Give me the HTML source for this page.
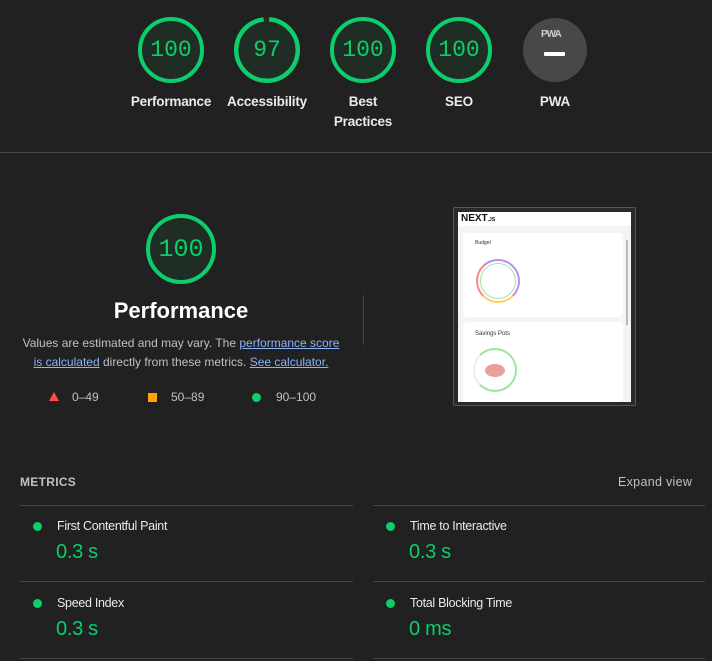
<!DOCTYPE html>
<html><head><meta charset="utf-8"><style>
*{margin:0;padding:0;box-sizing:border-box}
body{width:712px;height:661px;background:#212121;font-family:"Liberation Sans",Arial,sans-serif;color:#e8eaed;position:relative;overflow:hidden}
.abs{position:absolute}
.g{position:absolute;width:66px;height:66px;border-radius:50%;border:4.5px solid #0cce6b;background:#1f2d25;color:#0cce6b;font-family:"Liberation Mono",monospace;font-size:23px;display:flex;align-items:center;justify-content:center}
.lbl{position:absolute;width:96px;text-align:center;font-size:13.5px;font-weight:bold;line-height:20px;color:#e8eaed;letter-spacing:-0.2px}
.hr{position:absolute;height:1px;background:#444}
.dot{position:absolute;width:9px;height:9px;border-radius:50%;background:#0cce6b}
.mt{position:absolute;font-size:12.5px;color:#e8eaed;letter-spacing:-0.3px}
.mv{position:absolute;font-size:20px;color:#0cce6b;letter-spacing:-0.3px}
</style></head><body>
<div class="g" style="left:138px;top:17px">100</div>
<div class="g" style="left:234px;top:17px;border:none">
 <svg class="abs" style="left:0;top:0" width="66" height="66"><circle cx="33" cy="33" r="30.75" fill="none" stroke="#0cce6b" stroke-width="4.5" stroke-dasharray="187.4 193.2" transform="rotate(-86 33 33)"/></svg>
 <span style="position:relative">97</span></div>
<div class="g" style="left:330px;top:17px">100</div>
<div class="g" style="left:426px;top:17px">100</div>
<div class="abs" style="left:523px;top:18px;width:64px;height:64px;border-radius:50%;background:#484848"></div>
<div class="abs" style="left:541px;top:29px;font-size:10px;color:#ccc;font-weight:bold;letter-spacing:-1px">PWA</div>
<div class="abs" style="left:544px;top:52px;width:21px;height:4px;background:#fff;border-radius:1px"></div>
<div class="lbl" style="left:123px;top:92px">Performance</div>
<div class="lbl" style="left:219px;top:92px">Accessibility</div>
<div class="lbl" style="left:315px;top:92px">Best<br>Practices</div>
<div class="lbl" style="left:411px;top:92px">SEO</div>
<div class="lbl" style="left:507px;top:92px">PWA</div>
<div class="hr" style="left:0;top:152px;width:712px"></div>

<div class="g" style="left:146px;top:214px;width:70px;height:70px;font-size:25px">100</div>
<div class="abs" style="left:40px;top:298px;width:282px;text-align:center;font-size:22px;font-weight:bold;color:#fff">Performance</div>
<div class="abs" style="left:20px;top:334px;width:322px;text-align:center;font-size:12px;line-height:19px;color:#bdc1c6">Values are estimated and may vary. The <span style="color:#8ab4f8;text-decoration:underline">performance score is calculated</span> directly from these metrics. <span style="color:#8ab4f8;text-decoration:underline">See calculator.</span></div>
<div class="abs" style="left:49px;top:392px;width:0;height:0;border-left:5px solid transparent;border-right:5px solid transparent;border-bottom:9px solid #ff4e42"></div>
<div class="abs" style="left:72px;top:390px;font-size:12px;color:#bdc1c6">0–49</div>
<div class="abs" style="left:148px;top:393px;width:9px;height:9px;background:#ffa400"></div>
<div class="abs" style="left:171px;top:390px;font-size:12px;color:#bdc1c6">50–89</div>
<div class="abs" style="left:252px;top:393px;width:9px;height:9px;border-radius:50%;background:#0cce6b"></div>
<div class="abs" style="left:276px;top:390px;font-size:12px;color:#bdc1c6">90–100</div>
<div class="abs" style="left:363px;top:295px;width:1px;height:50px;background:#444"></div>

<div class="abs" style="left:453px;top:207px;width:183px;height:199px;background:#2a2a2a;border:1px solid #555;border-radius:2px"></div>
<div class="abs" style="left:458px;top:212px;width:173px;height:190px;background:#f4f4f8">
 <div class="abs" style="left:0;top:0;width:173px;height:14px;background:#fff"></div>
 <div class="abs" style="left:3px;top:1px;font-size:10px;font-weight:bold;color:#111;letter-spacing:0">NEXT<span style="font-size:5px">.JS</span></div>
 <div class="abs" style="left:5px;top:21px;width:160px;height:84px;background:#fff;border-radius:4px"></div>
 <div class="abs" style="left:17px;top:28px;font-size:5px;color:#333">Budget</div>
 <div class="abs" style="left:18px;top:47px;width:44px;height:44px;border-radius:50%;border:2px solid #c08af0;border-left-color:#f88;border-bottom-color:#fc6"></div>
 <div class="abs" style="left:22px;top:51px;width:36px;height:36px;border-radius:50%;border:1.5px solid #9de59d"></div>
 <div class="abs" style="left:5px;top:110px;width:160px;height:80px;background:#fff;border-radius:4px"></div>
 <div class="abs" style="left:17px;top:119px;font-size:6px;color:#333">Savings Pots</div>
 <div class="abs" style="left:15px;top:136px;width:44px;height:44px;border-radius:50%;border:2px solid #9de59d;border-left-color:#eee"></div>
 <div class="abs" style="left:27px;top:152px;width:20px;height:13px;border-radius:50%;background:#e8a09a"></div>
 <div class="abs" style="left:168px;top:28px;width:2px;height:85px;background:#bbb"></div>
</div>

<div class="abs" style="left:20px;top:475px;font-size:12px;font-weight:bold;color:#bdc1c6;letter-spacing:.3px">METRICS</div>
<div class="abs" style="left:618px;top:475px;font-size:12.5px;color:#bdc1c6;letter-spacing:.3px">Expand view</div>
<div class="hr" style="left:20px;top:505px;width:333px"></div>
<div class="hr" style="left:373px;top:505px;width:332px"></div>
<div class="dot" style="left:33px;top:522px"></div><div class="mt" style="left:57px;top:519px">First Contentful Paint</div><div class="mv" style="left:56px;top:541px">0.3 s</div>
<div class="dot" style="left:386px;top:522px"></div><div class="mt" style="left:410px;top:519px">Time to Interactive</div><div class="mv" style="left:409px;top:541px">0.3 s</div>
<div class="hr" style="left:20px;top:581px;width:333px"></div>
<div class="hr" style="left:373px;top:581px;width:332px"></div>
<div class="dot" style="left:33px;top:599px"></div><div class="mt" style="left:57px;top:596px">Speed Index</div><div class="mv" style="left:56px;top:618px">0.3 s</div>
<div class="dot" style="left:386px;top:599px"></div><div class="mt" style="left:410px;top:596px">Total Blocking Time</div><div class="mv" style="left:409px;top:618px">0 ms</div>
<div class="hr" style="left:20px;top:658px;width:333px"></div>
<div class="hr" style="left:373px;top:658px;width:332px"></div>
</body></html>
